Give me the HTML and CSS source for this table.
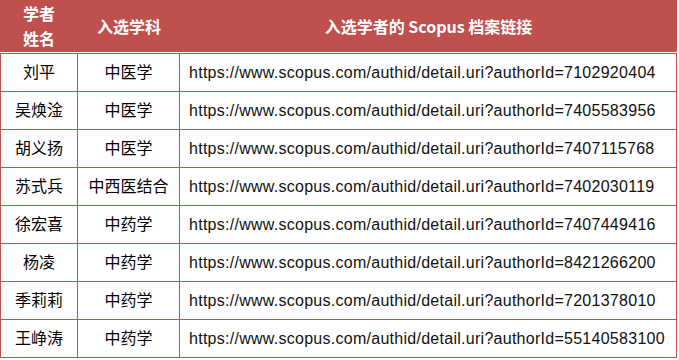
FILE: index.html
```html
<!DOCTYPE html>
<html lang="zh-CN">
<head>
<meta charset="utf-8">
<title>入选学者</title>
<link rel="stylesheet" href="styles.css">
</head>
<body>
<table class="scholars">
  <colgroup>
    <col class="col-name">
    <col class="col-subj">
    <col class="col-link">
  </colgroup>
  <thead>
    <tr>
      <th>学者<br>姓名</th>
      <th>入选学科</th>
      <th>入选学者的 Scopus 档案链接</th>
    </tr>
  </thead>
  <tbody>
    <tr><td>刘平</td><td>中医学</td><td class="link">https://www.scopus.com/authid/detail.uri?authorId=7102920404</td></tr>
    <tr><td>吴焕淦</td><td>中医学</td><td class="link">https://www.scopus.com/authid/detail.uri?authorId=7405583956</td></tr>
    <tr><td>胡义扬</td><td>中医学</td><td class="link">https://www.scopus.com/authid/detail.uri?authorId=7407115768</td></tr>
    <tr><td>苏式兵</td><td>中西医结合</td><td class="link">https://www.scopus.com/authid/detail.uri?authorId=7402030119</td></tr>
    <tr><td>徐宏喜</td><td>中药学</td><td class="link">https://www.scopus.com/authid/detail.uri?authorId=7407449416</td></tr>
    <tr><td>杨凌</td><td>中药学</td><td class="link">https://www.scopus.com/authid/detail.uri?authorId=8421266200</td></tr>
    <tr><td>季莉莉</td><td>中药学</td><td class="link">https://www.scopus.com/authid/detail.uri?authorId=7201378010</td></tr>
    <tr><td>王峥涛</td><td>中药学</td><td class="link">https://www.scopus.com/authid/detail.uri?authorId=55140583100</td></tr>
  </tbody>
</table>
</body>
</html>
```
FILE: styles.css
```css
html, body {
  margin: 0;
  padding: 0;
  background: #ffffff;
}

.scholars {
  border-collapse: separate;
  border-spacing: 0;
  table-layout: fixed;
  width: 677px;
  font-family: "Liberation Sans", "Noto Sans CJK SC", sans-serif;
  font-size: 16px;
  color: #000000;
}

.col-name { width: 78px; }
.col-subj { width: 102px; }
.col-link { width: 497px; }

.scholars th {
  box-sizing: border-box;
  height: 53px;
  padding: 0;
  background: #c0504d;
  color: #ffffff;
  font-family: "Noto Sans CJK SC", sans-serif;
  font-weight: bold;
  font-size: 16px;
  line-height: 25px;
  text-align: center;
  vertical-align: middle;
  border-bottom: 1px solid #ffffff;
}

.scholars td {
  box-sizing: border-box;
  height: 38px;
  padding: 0;
  line-height: 20px;
  text-align: center;
  vertical-align: middle;
  white-space: nowrap;
  border-right: 1px solid #c0504d;
  border-bottom: 1px solid #c0504d;
}

.scholars tbody tr:first-child td {
  height: 39px;
  border-top: 1px solid #c0504d;
}

.scholars td:first-child {
  border-left: 1px solid #c0504d;
}

.scholars td.link {
  text-align: left;
  padding-left: 9px;
  letter-spacing: 0.27px;
  color: #111111;
}
```
